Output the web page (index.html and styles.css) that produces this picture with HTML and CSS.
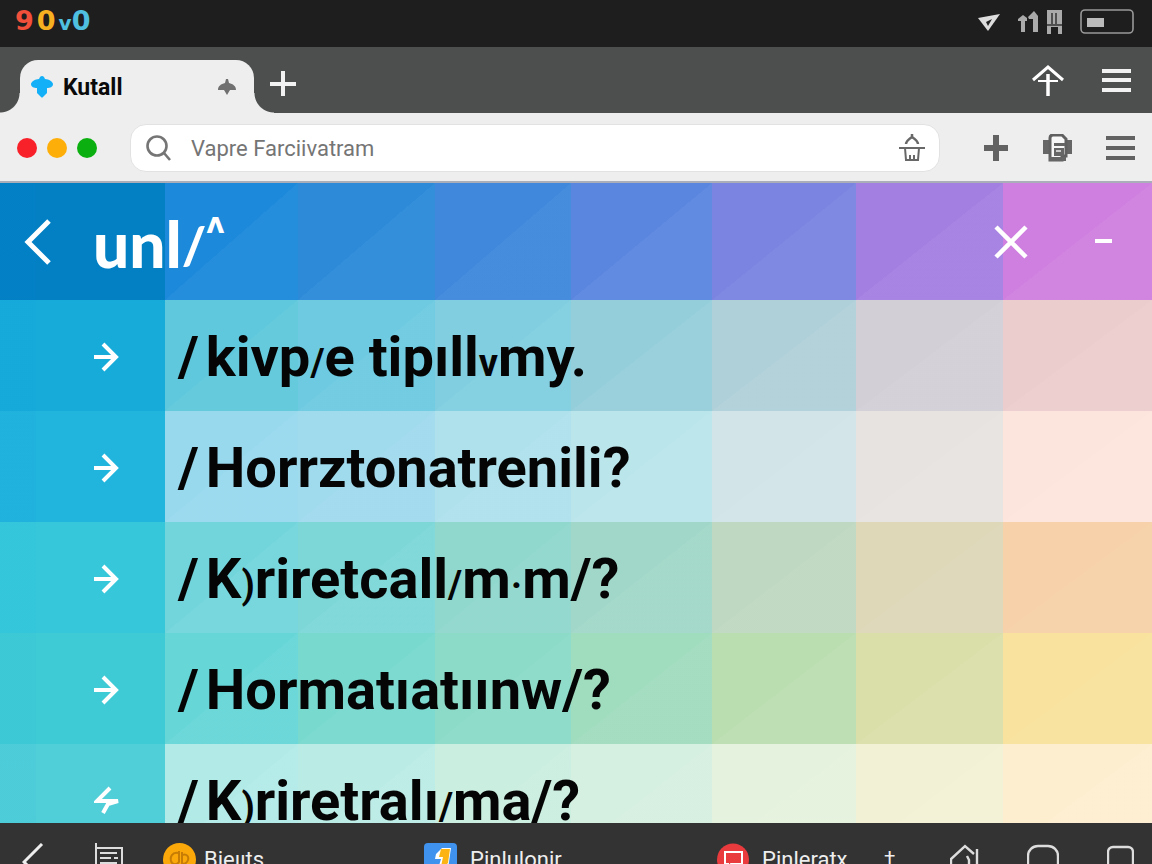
FILE: index.html
```html
<!DOCTYPE html>
<html lang="en">
<head>
    <meta charset="UTF-8">
    <meta name="viewport" content="width=device-width, initial-scale=1.0">
    <title>Kutall</title>
    <link rel="stylesheet" href="styles.css">
</head>
<body>
    <div class="status-bar">
        <div class="clock"><span class="red">9</span><span class="yellow">0</span><span class="cyan"><span class="mark">v</span>0</span></div>
        <div class="status-icons">
            <svg width="22" height="26" viewBox="0 0 22 26"><path d="M0 9L22 5 10 22z" fill="#ddd"/><path d="M8 13l6-3-4 7z" fill="#222"/></svg>
            <svg width="21" height="24" viewBox="0 0 21 24"><path d="M0 9l5-4 4 3v3H7v11H3V11H0zM10 7l6-6 4 5v16h-5V9h-4z" fill="#aaa"/></svg>
            <svg width="15" height="24" viewBox="0 0 15 24"><path d="M0 0h15v24h-4v-7H4v7H0z" fill="#aaa"/><path d="M5 3v11M9 3v11M0 15h15" stroke="#333" stroke-width="1.5"/></svg>
            <svg width="54" height="26" viewBox="0 0 54 26"><rect x="1" y="1" width="52" height="23" rx="4" fill="none" stroke="#999" stroke-width="1.6"/><rect x="7" y="9" width="17" height="9" fill="#bbb"/></svg>
        </div>
    </div>

    <div class="tab-bar">
        <div class="tab">
            <svg width="22" height="22" viewBox="0 0 22 22"><path d="M9 1q2-2 4 0l1 2c4 0 8 3 8 5 0 3-3 4-6 4v5l-4 4q-1 1-2 0l-4-4v-5c-3 0-6-1-6-4 0-2 4-5 8-5z" fill="#13b0f7"/></svg>
            <span class="tab-title">Kutall</span>
            <button class="icon-button" aria-label="Close tab">
                <svg width="18" height="16" viewBox="0 0 18 16"><path d="M8 0h2l1 4c4 1 7 3 7 7h-6l-3 5-3-5H0c0-4 3-6 7-7z" fill="#707070"/></svg>
            </button>
        </div>
        <button class="icon-button new-tab" aria-label="New tab">
            <svg width="26" height="26" viewBox="0 0 26 26"><path d="M13 0v25M0 13h26" stroke="#f2f2f2" stroke-width="4"/></svg>
        </button>
        <div class="tab-actions">
            <button class="icon-button" aria-label="Share">
                <svg width="32" height="32" viewBox="0 0 32 32" fill="none" stroke="#fff"><path d="M1 15L16 2l15 13" stroke-width="3"/><path d="M16 9v22" stroke-width="3.500"/><path d="M6 16h20" stroke-width="2"/></svg>
            </button>
            <button class="icon-button" aria-label="Tab menu">
                <svg width="30" height="26" viewBox="0 0 30 26"><path d="M0 3h29M0 12h29M0 22h29" stroke="#f2f2f2" stroke-width="4"/></svg>
            </button>
        </div>
    </div>

    <div class="toolbar">
        <div class="lights">
            <span class="light light-red"></span>
            <span class="light light-yellow"></span>
            <span class="light light-green"></span>
        </div>
        <div class="address">
            <svg width="26" height="26" viewBox="0 0 26 26" fill="none" stroke="#757575" stroke-width="2.6"><circle cx="11" cy="11" r="9.5"/><path d="M18 18l6 7"/></svg>
            <input type="text" aria-label="Address" value="Vapre Farciivatram">
            <button class="icon-button" aria-label="Home">
                <svg width="26" height="28" viewBox="0 0 26 28" fill="none" stroke="#686868" stroke-width="2"><path d="M13 0v4M7 10c0-3 3-5 6-7 3 2 6 4 6 7" stroke-width="2.5"/><path d="M0 14h26M6 14l1 12h12l1-12M11 26v-5M15 26v-5"/></svg>
            </button>
        </div>
        <div class="tools">
            <button class="icon-button" aria-label="Add">
                <svg width="25" height="26" viewBox="0 0 25 26"><path d="M12 0v26M0 13h24" stroke="#626262" stroke-width="6"/></svg>
            </button>
            <button class="icon-button" aria-label="Print">
                <svg width="29" height="28" viewBox="0 0 29 28"><path d="M0 6h6v14H0zM24 6h5v14h-5z" fill="#666"/><path d="M7 4q0-3 3-3h9l4 4v17h-4v4H7z" fill="#f8f8f8" stroke="#606060" stroke-width="3"/><path d="M11 9h11v3H11zM11 14h10v8H11zM6 23h17v4H6z" fill="#666"/><path d="M13 17h5" stroke="#eee" stroke-width="1.5"/></svg>
            </button>
            <button class="icon-button" aria-label="Menu">
                <svg width="29" height="26" viewBox="0 0 29 26"><path d="M0 3h29M0 13h29M0 23h29" stroke="#626262" stroke-width="4"/></svg>
            </button>
        </div>
    </div>

    <main class="content">
        <header class="band band-header">
            <div class="tiles"><span></span><span></span><span></span><span></span><span></span><span></span><span></span><span></span></div>
            <div class="band-row">
                <button class="icon-button back" aria-label="Back">
                    <svg width="28" height="46" viewBox="0 0 28 46" fill="none" stroke="#fff" stroke-width="5"><path d="M25 2L4 23l21 21"/></svg>
                </button>
                <h1 class="brand">unl<span class="brand-slash">/</span><span class="brand-top">ʌ</span></h1>
                <div class="window-actions">
                    <button class="icon-button" aria-label="Close">
                        <svg width="34" height="34" viewBox="0 0 34 34"><path d="M2 2l30 30M32 2L2 32" stroke="#fff" stroke-width="4.5"/></svg>
                    </button>
                    <button class="icon-button" aria-label="Minimize">
                        <svg width="17" height="5" viewBox="0 0 17 5"><path d="M0 2h17" stroke="#fff" stroke-width="4"/></svg>
                    </button>
                </div>
            </div>
        </header>
        <ul class="list">
            <li class="band band-sky">
                <div class="tiles"><span></span><span></span><span></span><span></span><span></span><span></span><span></span><span></span></div>
                <a class="band-row" href="#">
                    <svg class="arrow" width="26" height="30" viewBox="0 0 26 30"><path d="M0 15h22M9 2l13 13L9 28" /></svg>
                    <span class="label"><span class="slash">/</span>kivp<span class="tiny">/</span>e tipıll<span class="tiny">v</span>my.</span>
                </a>
            </li>
            <li class="band band-pale">
                <div class="tiles"><span></span><span></span><span></span><span></span><span></span><span></span><span></span><span></span></div>
                <a class="band-row" href="#">
                    <svg class="arrow" width="26" height="30" viewBox="0 0 26 30"><path d="M0 15h22M9 2l13 13L9 28" /></svg>
                    <span class="label"><span class="slash">/</span>Horrztonatrenili?</span>
                </a>
            </li>
            <li class="band band-sand">
                <div class="tiles"><span></span><span></span><span></span><span></span><span></span><span></span><span></span><span></span></div>
                <a class="band-row" href="#">
                    <svg class="arrow" width="26" height="30" viewBox="0 0 26 30"><path d="M0 15h22M9 2l13 13L9 28" /></svg>
                    <span class="label"><span class="slash">/</span>K<span class="tiny">)</span>riretcall<span class="tiny">/</span>m<span class="tiny">·</span>m/?</span>
                </a>
            </li>
            <li class="band band-lime">
                <div class="tiles"><span></span><span></span><span></span><span></span><span></span><span></span><span></span><span></span></div>
                <a class="band-row" href="#">
                    <svg class="arrow" width="26" height="30" viewBox="0 0 26 30"><path d="M0 15h22M9 2l13 13L9 28" /></svg>
                    <span class="label"><span class="slash">/</span>Hormatıatıınw/?</span>
                </a>
            </li>
            <li class="band band-cream">
                <div class="tiles"><span></span><span></span><span></span><span></span><span></span><span></span><span></span><span></span></div>
                <a class="band-row" href="#">
                    <svg class="arrow" width="26" height="30" viewBox="0 0 26 30"><path d="M16 2L3 15h21L14 18l-5 9" /></svg>
                    <span class="label"><span class="slash">/</span>K<span class="tiny">)</span>riretralı<span class="tiny">/</span>ma/?</span>
                </a>
            </li>
        </ul>
    </main>

    <nav class="dock">
        <button class="icon-button" aria-label="Back">
            <svg width="22" height="40" viewBox="0 0 22 40" fill="none" stroke="#eee" stroke-width="3"><path d="M20 1L2 19l18 18"/></svg>
        </button>
        <button class="icon-button" aria-label="Reader">
            <svg width="30" height="32" viewBox="0 0 30 32" fill="none" stroke="#ddd" stroke-width="2"><path d="M2 0v32M2 5h26v27M6 10h17M6 15h11M6 20h17M20 15h4"/></svg>
        </button>
        <a class="app" href="#">
            <svg width="33" height="33" viewBox="0 0 33 33"><circle cx="16.500" cy="16.500" r="16.500" fill="#fba90a"/><path d="M15 10c-6-1-8 4-7 8s6 4 8 1V8M19 9v12M19 12c5-2 7 2 6 5s-4 5-6 3" fill="none" stroke="#c77d05" stroke-width="2"/></svg>
            Bieııts
        </a>
        <a class="app app-wide" href="#">
            <svg width="33" height="33" viewBox="0 0 33 33"><rect width="33" height="33" rx="4" fill="#3f93ee"/><path d="M12 11l6-6h9l-4 28H12l5-17h-6z" fill="#fff"/><path d="M17 6h9l-2 14-8 8 3-14h-4z" fill="#fbb414"/></svg>
            Pinlulonir
        </a>
        <a class="app app-wide" href="#">
            <svg width="32" height="33" viewBox="0 0 32 33"><circle cx="16" cy="16.500" r="16" fill="#e93b3e"/><path d="M8 9h17v12H14l-3 3v-3H8z" fill="none" stroke="#fff" stroke-width="2"/></svg>
            Pinleratx
        </a>
        <span class="dagger">‡</span>
        <button class="icon-button" aria-label="Home">
            <svg width="29" height="34" viewBox="0 0 29 34" fill="none" stroke="#ddd" stroke-width="2.400"><path d="M1 34V16L15 3l9 8M27 6v28M17 13l2 4v17"/></svg>
        </button>
        <button class="icon-button" aria-label="Tabs">
            <svg width="32" height="34" viewBox="0 0 32 34"><rect x="1" y="3" width="30" height="29" rx="10" fill="none" stroke="#ddd" stroke-width="2.400"/></svg>
        </button>
        <button class="icon-button" aria-label="Windows">
            <svg width="27" height="34" viewBox="0 0 27 34"><rect x="1" y="4" width="25" height="28" rx="5" fill="none" stroke="#ddd" stroke-width="2.400"/></svg>
        </button>
    </nav>
</body>
</html>
```
FILE: styles.css
```css
* {
    margin: 0;
    padding: 0;
    box-sizing: border-box;
}

body {
    height: 100vh;
    display: flex;
    flex-direction: column;
    overflow: hidden;
    font-family: Roboto, "Liberation Sans", sans-serif;
    background: #333;
}

svg {
    display: block;
    flex: none;
}

a {
    color: inherit;
    text-decoration: none;
}

.icon-button {
    border: none;
    background: none;
    cursor: pointer;
}

/* Status bar */
.status-bar {
    flex: none;
    height: 47px;
    padding: 0 18px 4px 15px;
    display: flex;
    justify-content: space-between;
    align-items: center;
    background: #1e1e1e;
}

.clock {
    display: flex;
    gap: 3px;
    font-family: "DejaVu Sans", sans-serif;
    font-size: 27px;
    line-height: 32px;
    font-weight: 700;
}

.red {
    color: #f2503b;
}

.yellow {
    color: #f7b020;
}

.cyan {
    color: #4fc0e0;
}

.mark {
    font-size: 20px;
}

.status-icons {
    display: flex;
    align-items: center;
}

.status-icons svg {
    margin-left: 18px;
}

.status-icons svg:nth-child(3) {
    margin-left: 8px;
}

/* Tabs */
.tab-bar {
    flex: none;
    height: 66px;
    padding: 13px 20px 0;
    display: flex;
    background: #4d4e4e;
}

.tab {
    position: relative;
    width: 234px;
    padding: 0 18px 0 11px;
    display: flex;
    align-items: center;
    gap: 10px;
    border-radius: 18px 18px 0 0;
    background: #eee;
}

/* flared corners at the foot of the tab */
.tab::before,
.tab::after {
    content: "";
    position: absolute;
    bottom: 0;
    width: 20px;
    height: 20px;
}

.tab::before {
    right: 100%;
    background: radial-gradient(circle at 0 0, transparent 19px, #eee 20px);
}

.tab::after {
    left: 100%;
    background: radial-gradient(circle at 100% 0, transparent 19px, #eee 20px);
}

.tab-title {
    flex: 1;
    padding-top: 2px;
    font-size: 23px;
    font-weight: 700;
    color: #0a0a0a;
}

.new-tab {
    margin-left: 16px;
    padding-bottom: 6px;
}

.tab-actions {
    margin-left: auto;
    padding-bottom: 12px;
    display: flex;
    align-items: center;
    gap: 38px;
}

/* Toolbar */
.toolbar {
    flex: none;
    height: 70px;
    padding: 2px 17px 0;
    display: flex;
    align-items: center;
    background: #eee;
    border-bottom: 2px solid #a9aeb8;
}

.lights {
    display: flex;
    gap: 10px;
}

.light {
    width: 20px;
    height: 20px;
    border-radius: 50%;
}

.light-red {
    background: #f8212a;
}

.light-yellow {
    background: #feae08;
}

.light-green {
    background: #0bb010;
}

.address {
    flex: 1;
    height: 48px;
    margin: 0 44px 0 33px;
    padding: 0 14px 0 15px;
    display: flex;
    align-items: center;
    gap: 19px;
    border: 1px solid #e2e2e2;
    border-radius: 16px;
    background: #fff;
}

.address input {
    flex: 1;
    min-width: 0;
    border: none;
    outline: none;
    background: none;
    font-family: inherit;
    font-size: 22px;
    color: #757575;
}

.tools {
    display: flex;
    align-items: center;
    gap: 34px;
}

/* Page */
.content {
    flex: 1;
    min-height: 0;
    overflow: hidden;
}

.list {
    list-style: none;
}

.band {
    height: 111px;
    display: grid;
}

.band-header {
    height: 117px;
}

/* the tiles and the row share one grid cell */
.tiles,
.band-row {
    grid-area: 1 / 1;
}

.tiles {
    display: grid;
    grid-template-columns: 165fr 133fr 137fr 136fr 141fr 144fr 147fr 149fr;
}

.tiles span {
    background-image: linear-gradient(to bottom right, transparent 50%, rgba(255, 255, 255, 0.04) 50%);
}

.tiles span:nth-child(1) {
    background-color: var(--c1);
    background-image: linear-gradient(to right, rgba(0, 140, 230, 0.04) 22%, transparent 22%);
}

.tiles span:nth-child(2) { background-color: var(--c2); }
.tiles span:nth-child(3) { background-color: var(--c3); }
.tiles span:nth-child(4) { background-color: var(--c4); }
.tiles span:nth-child(5) { background-color: var(--c5); }
.tiles span:nth-child(6) { background-color: var(--c6); }
.tiles span:nth-child(7) { background-color: var(--c7); }
.tiles span:nth-child(8) { background-color: var(--c8); }

.band-header {
    --c1: #0380c4;
    --c2: #1c89db;
    --c3: #2c8ad8;
    --c4: #3f88dc;
    --c5: #5b86e0;
    --c6: #7b84e0;
    --c7: #a47fe2;
    --c8: #cf7fdf;
}

.band-sky {
    --c1: #16abd9;
    --c2: #60c8dc;
    --c3: #6dcae0;
    --c4: #80cee0;
    --c5: #95cedb;
    --c6: #b0d0d9;
    --c7: #d2cfd7;
    --c8: #eccdce;
}

.band-pale {
    --c1: #21b4dc;
    --c2: #98d9ee;
    --c3: #a0daed;
    --c4: #aee1ec;
    --c5: #bae5eb;
    --c6: #d2e4e8;
    --c7: #e7e3e1;
    --c8: #fce5dc;
}

.band-sand {
    --c1: #36c8da;
    --c2: #73d5dc;
    --c3: #7dd7d7;
    --c4: #90d7ce;
    --c5: #a1d7c8;
    --c6: #bfd8c1;
    --c7: #ded7b8;
    --c8: #f7d1a9;
}

.band-lime {
    --c1: #3fcbd5;
    --c2: #67d6d7;
    --c3: #78d9cf;
    --c4: #8bdbc8;
    --c5: #a0dcbe;
    --c6: #bbdeb0;
    --c7: #dadfaa;
    --c8: #f9e29d;
}

.band-cream {
    --c1: #50cfd8;
    --c2: #b2eae7;
    --c3: #bbebe5;
    --c4: #caeee0;
    --c5: #d5efe0;
    --c6: #e5f2dd;
    --c7: #f3f1d5;
    --c8: #feeed0;
}

.band-row {
    display: flex;
    align-items: center;
}

.back {
    margin-left: 24px;
}

.brand {
    display: flex;
    align-items: center;
    padding-top: 4px;
    margin-left: 41px;
    font-family: Lato, sans-serif;
    font-size: 64px;
    line-height: 72px;
    font-weight: 900;
    color: #fff;
}

.brand-slash {
    font-size: 52px;
}

.brand-top {
    align-self: flex-start;
    font-family: "DejaVu Sans", sans-serif;
    font-size: 28px;
    line-height: 32px;
}

.window-actions {
    margin-left: auto;
    padding-right: 40px;
    display: flex;
    align-items: center;
    gap: 67px;
}

.arrow {
    margin: 2px 58px 0 94px;
    fill: none;
    stroke: #fff;
    stroke-width: 4;
}

.label {
    padding-top: 2px;
    font-size: 56px;
    line-height: 64px;
    font-weight: 700;
    color: #050505;
    white-space: nowrap;
}

.slash {
    margin-right: 7px;
}

.tiny {
    font-size: 38px;
    line-height: 1;
}

/* Dock, cut off by the bottom of the window */
.dock {
    flex: none;
    height: 41px;
    padding: 20px 0 0 22px;
    display: grid;
    grid-template-columns: 72fr 69fr 261fr 293fr 167fr 66fr 77fr 80fr 45fr;
    justify-items: start;
    align-items: start;
    overflow: hidden;
    background: #333;
    color: #eee;
}

.app {
    display: flex;
    align-items: center;
    gap: 8px;
    font-size: 22px;
    line-height: 33px;
}

.app-wide {
    gap: 13px;
}

.dagger {
    font-size: 20px;
    line-height: 33px;
}
```
